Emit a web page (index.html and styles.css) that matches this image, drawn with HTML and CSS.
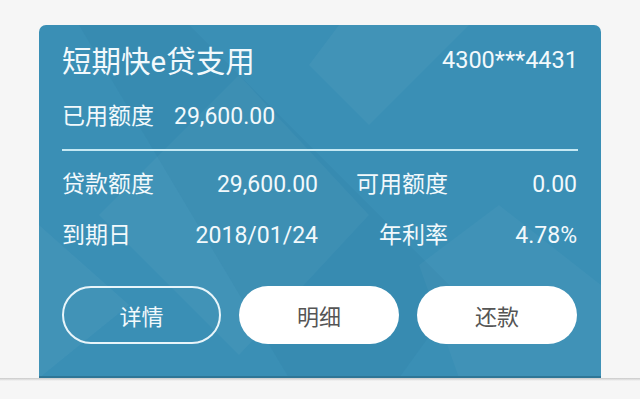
FILE: index.html
```html
<!DOCTYPE html>
<html lang="zh-CN">
<head>
<meta charset="utf-8">
<title>短期快e贷支用</title>
<link rel="stylesheet" href="styles.css">
</head>
<body>
<div class="card">
  <svg class="deco" width="562" height="353" viewBox="0 0 562 353" aria-hidden="true">
    <polygon points="200,50 330,190 200,330 60,190" fill="#ffffff" opacity="0.04"/>
    <polygon points="40,0 150,0 420,270 360,353 250,353" fill="#1f6f96" opacity="0.10"/>
    <polygon points="300,0 430,0 330,100 270,40" fill="#ffffff" opacity="0.04"/>
    <polygon points="380,240 460,180 562,260 562,353 420,353" fill="#ffffff" opacity="0.03"/>
    <polygon points="0,200 90,280 0,353" fill="#ffffff" opacity="0.04"/>
  </svg>
  <div class="head">
    <div class="title">短期快e贷支用</div>
    <div class="acct">4300***4431</div>
  </div>
  <div class="used">
    <span class="used-label">已用额度</span>
    <span class="used-value">29,600.00</span>
  </div>
  <div class="rule"></div>
  <div class="grid">
    <div class="lbl">贷款额度</div>
    <div class="val">29,600.00</div>
    <div class="lbl2">可用额度</div>
    <div class="val">0.00</div>
    <div class="lbl">到期日</div>
    <div class="val">2018/01/24</div>
    <div class="lbl2">年利率</div>
    <div class="val">4.78%</div>
  </div>
  <div class="buttons">
    <div class="btn btn-outline">详情</div>
    <div class="btn btn-solid">明细</div>
    <div class="btn btn-solid">还款</div>
  </div>
</div>
<div class="shadow"></div>
</body>
</html>
```
FILE: styles.css
```css
html, body {
  margin: 0;
  padding: 0;
  background: #f6f6f6;
  width: 640px;
  height: 399px;
  overflow: hidden;
  font-family: Roboto, "Noto Sans CJK SC", sans-serif;
}
body {
  padding-top: 25px;
  box-sizing: border-box;
}
.card {
  position: relative;
  margin: 0 39px;
  width: 562px;
  box-sizing: border-box;
  padding: 17px 23px 32px 23px;
  background: #3a8fb5;
  border-radius: 7px 7px 0 0;
  border-bottom: 2px solid #2f7696;
  color: #f2f9fc;
  overflow: hidden;
}
.deco {
  position: absolute;
  left: 0;
  top: 0;
  pointer-events: none;
}
.head, .used, .rule, .grid, .buttons {
  position: relative;
}
.head {
  display: flex;
  justify-content: space-between;
  align-items: center;
  height: 40px;
}
.title {
  font-size: 29.5px;
  line-height: 40px;
}
.acct {
  font-size: 23.5px;
  line-height: 36px;
  margin-top: -4px;
}
.used {
  margin-top: 20px;
  display: flex;
  gap: 20px;
  font-size: 23px;
  line-height: 30px;
}
.rule {
  margin-top: 17px;
  height: 1.5px;
  background: #c4e8f3;
}
.grid {
  margin-top: 18px;
  display: grid;
  grid-template-columns: 120px 136px 130px 129px;
  row-gap: 19px;
  font-size: 23px;
  line-height: 32px;
}
.lbl {
  text-align: left;
}
.val, .lbl2 {
  text-align: right;
}
.buttons {
  margin-top: 34px;
  display: grid;
  grid-template-columns: 159px 160px 160px;
  column-gap: 18px;
}
.btn {
  height: 58px;
  border-radius: 29px;
  box-sizing: border-box;
  display: flex;
  align-items: center;
  justify-content: center;
  font-size: 22px;
}
.btn-outline {
  border: 2px solid #e8f5fa;
  color: #f2f9fc;
}
.btn-solid {
  background: #ffffff;
  color: #555555;
}
.shadow {
  height: 3px;
  background: linear-gradient(#c9c9c9, #f6f6f6);
}
```
